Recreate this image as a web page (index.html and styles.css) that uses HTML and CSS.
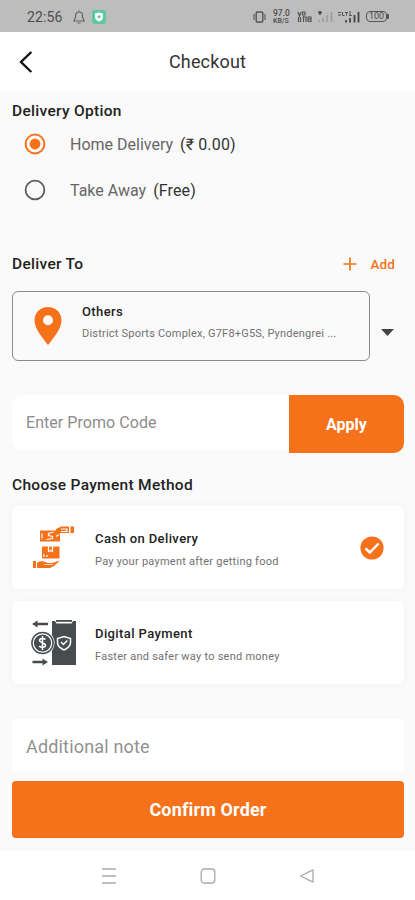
FILE: index.html
```html
<!DOCTYPE html>
<html lang="en">
<head>
<meta charset="utf-8">
<title>Checkout</title>
<link rel="stylesheet" href="styles.css">
</head>
<body>
<div class="status">
  <span class="clock">22:56</span>
  <svg class="bell" width="14" height="16" viewBox="0 0 14 16"><path d="M1 12h12M2.500 12V10l1-1.500V6.500a3.500 3.500 0 0 1 7 0v2l1 1.500v2M7 3V1.500M5.500 14h3" fill="none" stroke="#666" stroke-width="1.200"/></svg>
  <svg class="shield" width="14" height="14" viewBox="0 0 14 14"><rect width="14" height="14" rx="3" fill="#5cc9a0"/><path d="M7 2.500l4 1v3.500q0 3-4 4.500-4-1.500-4-4.500V3.500z" fill="#fff"/><circle cx="7" cy="6.700" r="1.500" fill="#5cc9a0"/></svg>
  <span class="grow"></span>
  <svg class="vibrate" width="13" height="12" viewBox="0 0 13 12"><rect x="3.200" y="1" width="6.600" height="10" rx="1" fill="none" stroke="#555" stroke-width="1.400"/><path d="M1 3v6M12 3v6" stroke="#666" stroke-width="1.300"/></svg>
  <span class="speed"><b class="rate">97.0</b><b class="unit">KB/S</b></span>
  <svg class="vo" width="15" height="12" viewBox="0 0 15 12"><path d="M1 1l1.500 4L4 1M5.500 1h2.500v3H5.500zM1.500 6v5M3.500 6v5M6.500 5v6M6.500 6h2.500v5M11 6h3v4.500h-3zM11 8.200h3" fill="none" stroke="#555" stroke-width="1.200"/></svg>
  <svg class="sig" width="15" height="12" viewBox="0 0 15 12"><path d="M0 1.500h4M2 0v4" stroke="#444" stroke-width="1.500"/><path d="M1 9v2M5 7v4" stroke="#999" stroke-width="1.400"/><path d="M9 4v7M13.500 1v10" stroke="#999" stroke-width="1.400"/></svg>
  <svg class="lte" width="22" height="12" viewBox="0 0 22 12"><path d="M0 1.500h3M0 4h3M4.500 1v3.500h2M7 1.500h3M8.500 1.500v3M11 1h2M11 3h2M11 4.500h3" fill="none" stroke="#555" stroke-width="1"/><path d="M8 9v2.500M12 7v4.500M16.500 4v7.500M20.500 1v10.500" stroke="#444" stroke-width="1.800"/></svg>
  <span class="battery">100</span><span class="nub"></span>
</div>
<header class="top">
  <svg class="back" width="14" height="22" viewBox="0 0 14 22"><path d="M12.300 1L2 11l10.300 10" fill="none" stroke="#111" stroke-width="2.400"/></svg>
  <h1>Checkout</h1>
</header>
<main>
  <h2 class="t-option">Delivery Option</h2>
  <div class="option">
    <svg width="22" height="22" viewBox="0 0 22 22"><circle cx="11" cy="11" r="9.400" fill="none" stroke="#f5721b" stroke-width="2"/><circle cx="11" cy="11" r="5.400" fill="#f5721b"/></svg>
    <span>Home Delivery</span><span class="price">(₹ 0.00)</span>
  </div>
  <div class="option">
    <svg width="22" height="22" viewBox="0 0 22 22"><circle cx="11" cy="11" r="9.400" fill="none" stroke="#5c5c5c" stroke-width="1.800"/></svg>
    <span>Take Away</span><span class="free">(Free)</span>
  </div>
  <div class="deliver">
    <h2>Deliver To</h2>
    <button class="add"><svg width="14" height="14" viewBox="0 0 14 14"><path d="M7 .5v13M.5 7h13" stroke="#f5721b" stroke-width="1.700"/></svg><span>Add</span></button>
  </div>
  <div class="address-row">
    <div class="address">
      <svg width="28" height="38" viewBox="0 0 28 38"><path fill-rule="evenodd" d="M14 0C6.300 0 .5 5.800.5 13.400.5 22 9 31 14 38c5-7 13.500-16 13.500-24.600C27.500 5.800 21.700 0 14 0zm0 8.300a5 5 0 1 1 0 10 5 5 0 0 1 0-10z" fill="#f5721b"/></svg>
      <div class="lines"><strong>Others</strong><span class="place">District Sports Complex, G7F8+G5S, Pyndengrei ...</span></div>
    </div>
    <svg class="caret" width="13" height="7" viewBox="0 0 13 7"><path d="M0 0h13L6.500 7z" fill="#444"/></svg>
  </div>
  <div class="promo">
    <div class="code"><span>Enter Promo Code</span></div>
    <button class="apply"><span>Apply</span></button>
  </div>
  <h2 class="t-pay">Choose Payment Method</h2>
  <div class="card">
    <svg class="pic" width="48" height="48" viewBox="0 0 48 48">
      <g fill="#f5721b"><path d="M10 6.500h20v11H10z"/><path d="M26 5l5-2.500h8V9h-9l-4 3z"/><path d="M40.500 2.500H44v6.500h-3.500z"/><path d="M12 22.500h17.500V34.500H12z"/><path d="M3 37h3v7H3z"/><path d="M7 38.500l5-1.500 6 2h4l8-2.500-6 5.500-4 2H7z"/></g>
      <path d="M12 9.500v5M23.500 8l-5 1.500v2l4 1v2l-6 1M26 12.500l3-2M31 5h6v2.500h-6M18.500 22v5.500l2-1 2 1V22M14 30v3M17 31v2" fill="none" stroke="#fff" stroke-width="1.200"/><path d="M14 40.500h9" stroke="#fff" stroke-width=".7"/>
    </svg>
    <div class="lines"><strong>Cash on Delivery</strong><span>Pay your payment after getting food</span></div>
    <svg class="check" width="24" height="24" viewBox="0 0 24 24"><circle cx="12" cy="12" r="11.600" fill="#f5721b"/><path d="M5.500 12.300l4.300 4.200 8.800-9" fill="none" stroke="#fff" stroke-width="2.500"/></svg>
  </div>
  <div class="card second">
    <svg class="pic" width="48" height="48" viewBox="0 0 48 48">
      <path d="M22 2h3l1.500 2.500h15L43 2h3v44H22z" fill="#474c4e"/><path d="M26 1h16v1.800H26z" fill="#474c4e"/>
      <circle cx="12.500" cy="24" r="12" fill="#fff"/><circle cx="12.500" cy="24" r="10.600" fill="none" stroke="#474c4e" stroke-width="1.500"/><circle cx="12.500" cy="24" r="8.600" fill="#474c4e"/>
      <path d="M15.500 20.500c-1-1.500-6-1.500-6 1s6 2 6 4.700-5 2.500-6.300.8M12.500 17v14" fill="none" stroke="#fff" stroke-width="1.500"/>
      <path d="M34 17.500l6.500 2v4q0 4.500-6.500 7.500-6.500-3-6.500-7.500v-4z" fill="none" stroke="#fff" stroke-width="1.500"/><path d="M31 23l2.400 2.500 4-4" fill="none" stroke="#fff" stroke-width="1.500"/>
      <path d="M6 5h12M2.500 43h12" stroke="#474c4e" stroke-width="2.400"/><path d="M2 5l5.500-3.500v7zM18 43l-5.500-3.500v7z" fill="#474c4e"/>
    </svg>
    <div class="lines"><strong>Digital Payment</strong><span>Faster and safer way to send money</span></div>
  </div>
  <div class="note"><span>Additional note</span></div>
  <button class="confirm"><span>Confirm Order</span></button>
</main>
<nav>
  <svg width="16" height="16" viewBox="0 0 16 16"><path d="M1 1h14M1 8h14M1 15h14" stroke="#aaa" stroke-width="1.300"/></svg>
  <svg width="16" height="16" viewBox="0 0 16 16"><rect x="1.200" y="1" width="13.600" height="14" rx="3" fill="none" stroke="#aaa" stroke-width="1.300"/></svg>
  <svg width="16" height="16" viewBox="0 0 16 16"><path d="M14 1.800v12.400L1.500 8z" fill="none" stroke="#aaa" stroke-width="1.300" stroke-linejoin="round"/></svg>
</nav>
</body>
</html>
```
FILE: styles.css
```css
* { box-sizing: border-box; }
body { margin: 0; width: 415px; height: 900px; overflow: hidden; background: #fafafa; font-family: Roboto, "Liberation Sans", sans-serif; color: #222; display: flex; flex-direction: column; }
svg { display: block; flex: none; }
span, strong, h1, h2 { white-space: nowrap; }
h1, h2 { margin: 0; font-weight: 400; }
button { border: 0; padding: 0; background: none; font-family: inherit; display: flex; align-items: center; }

.status { height: 32px; flex: none; background: #bdbdbd; display: flex; align-items: center; padding: 1px 26px 0 27px; color: #4d4d4d; }
.clock { font-size: 14px; letter-spacing: .1px; }
.bell { margin-left: 10px; }
.shield { margin-left: 6px; }
.grow { flex: 1; }
.vibrate { margin-right: 7px; }
.speed { width: 18px; display: flex; flex-direction: column; margin-right: 6px; }
.speed b { font-weight: 500; }
.speed .rate { font-size: 8.500px; line-height: 8px; }
.speed .unit { font-size: 7px; line-height: 8px; }
.vo { margin-right: 6px; }
.sig { margin-right: 5px; }
.lte { margin-right: 6px; }
.battery { width: 21px; height: 11px; border: 1.500px solid #555; border-radius: 4px; font-size: 9px; line-height: 9px; text-align: center; }
.nub { width: 2px; height: 5px; background: #555; border-radius: 0 1px 1px 0; }

.top { height: 59px; flex: none; background: #fff; display: grid; grid-template-columns: 48px 1fr 48px; align-items: center; }
.back { margin-left: 19px; }
.top h1 { font-size: 18px; letter-spacing: .15px; text-align: center; color: #333; }

main { height: 760px; flex: none; padding: 10px 11px 0 12px; display: flex; flex-direction: column; }
h2 { font-size: 15.500px; line-height: 20px; font-weight: 500; letter-spacing: .3px; }
.option { height: 46px; display: flex; align-items: center; padding-left: 12px; font-size: 16px; color: #666; }
.option svg { margin-right: 24px; }
.price, .free { color: #333; margin-left: 7px; letter-spacing: .15px; }

.deliver { margin-top: 41px; height: 20px; display: flex; justify-content: space-between; align-items: center; }
.add { color: #f5721b; font-size: 13.500px; font-weight: 500; gap: 14px; padding-right: 9px; letter-spacing: .1px; }
.add span { margin-top: -1px; }
.address-row { margin-top: 17px; height: 70px; display: flex; align-items: center; }
.address { width: 358px; height: 70px; border: 1px solid #8b8b8b; border-radius: 6px; display: flex; align-items: center; padding-left: 21px; }
.address .lines { margin-left: 20px; }
.lines { display: flex; flex-direction: column; }
.lines strong { font-weight: 500; font-size: 13px; line-height: 16px; letter-spacing: .4px; }
.lines span { font-size: 11px; line-height: 14px; margin-top: 7px; color: #707070; letter-spacing: .25px; }
.lines .place { letter-spacing: .21px; }
.address .lines { margin-top: -7px; }
.caret { margin: 12px 0 0 11px; }

.promo { margin-top: 34px; display: flex; height: 58px; align-items: flex-start; }
.code { flex: 1; height: 55px; background: #fff; border-radius: 10px 0 0 10px; display: flex; align-items: center; padding-left: 14px; color: #8c8c8c; font-size: 16px; letter-spacing: .05px; }
.apply { width: 115px; height: 58px; background: #f5721b; border-radius: 0 10px 10px 0; justify-content: center; color: #fff; font-size: 16px; font-weight: 700; }
.t-pay { margin-top: 22px; }
.card { margin-top: 11px; height: 83px; flex: none; background: #fff; border-radius: 6px; box-shadow: 0 0 8px rgba(0,0,0,.035); display: flex; align-items: center; padding: 0 20px 0 18px; }
.card.second { margin-top: 12px; }
.card .lines { margin-left: 17px; margin-top: 4px; }
.card .lines span { margin-top: 8px; }
.check { margin-left: auto; }
.note { margin-top: 35px; height: 52px; flex: none; background: #fff; border-radius: 3px; display: flex; align-items: center; padding: 3px 0 0 14px; font-size: 18px; letter-spacing: .17px; color: #929292; }
.confirm { margin-top: 10px; height: 57px; flex: none; background: #f5721b; border-radius: 4px; justify-content: center; color: #fff; font-size: 18px; font-weight: 700; letter-spacing: .15px; }

nav { height: 49px; flex: none; background: #fff; display: flex; justify-content: center; align-items: center; gap: 83px; }
```
